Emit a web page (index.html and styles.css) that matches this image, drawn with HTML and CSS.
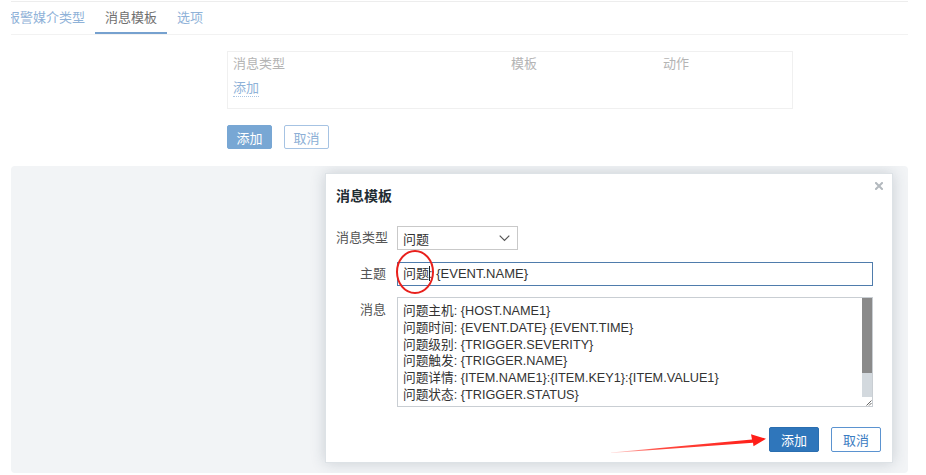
FILE: index.html
```html
<!DOCTYPE html>
<html lang="zh-CN">
<head>
<meta charset="utf-8">
<title>消息模板</title>
<link rel="stylesheet" href="styles.css">
</head>
<body>
<div class="page">
  <nav class="tabs">
    <div class="tabs-inner">
      <a class="tab tab-first">报警媒介类型</a>
      <a class="tab active">消息模板</a>
      <a class="tab">选项</a>
    </div>
  </nav>

  <div class="tpl-table">
    <div class="tpl-head"><span>消息类型</span><span>模板</span><span>动作</span></div>
    <div class="tpl-row"><a class="link">添加</a></div>
  </div>

  <div class="actions">
    <button class="btn btn-main-faded">添加</button>
    <button class="btn btn-alt-faded">取消</button>
  </div>

  <div class="overlay-area">
    <div class="modal">
      <button class="close" aria-label="关闭"><svg width="8" height="8" viewBox="0 0 8 8"><path d="M1 1L7 7M7 1L1 7" stroke="#b3b9be" stroke-width="2" stroke-linecap="square"/></svg></button>
      <h2 class="modal-title">消息模板</h2>
      <div class="form">
        <label class="f-label">消息类型</label>
        <div class="select"><span>问题</span><svg width="11" height="7" viewBox="0 0 11 7"><polyline points="0.7,0.7 5.5,5.5 10.3,0.7" fill="none" stroke="#555" stroke-width="1.2"/></svg></div>

        <label class="f-label">主题</label>
        <div class="input">问题<span class="caret"></span>: {EVENT.NAME}</div>

        <label class="f-label f-top">消息</label>
        <div class="textarea">
          <div class="ta-text">问题主机: {HOST.NAME1}
问题时间: {EVENT.DATE} {EVENT.TIME}
问题级别: {TRIGGER.SEVERITY}
问题触发: {TRIGGER.NAME}
问题详情: {ITEM.NAME1}:{ITEM.KEY1}:{ITEM.VALUE1}
问题状态: {TRIGGER.STATUS}</div>
          <div class="ta-scroll">
            <div class="ta-thumb"></div>
            <div class="ta-track"></div>
            <div class="ta-corner"><svg width="7" height="7" viewBox="0 0 7 7"><path d="M6.5 1.5L1.5 6.5M6.5 4L4 6.5" stroke="#666" stroke-width="1"/></svg></div>
          </div>
        </div>
      </div>
      <div class="modal-footer">
        <button class="btn btn-main">添加</button>
        <button class="btn btn-alt">取消</button>
      </div>

      <svg class="mark-circle" width="44" height="48" viewBox="0 0 44 48"><ellipse cx="21" cy="24" rx="18" ry="21" fill="none" stroke="#e8201c" stroke-width="2"/></svg>
      <svg class="mark-arrow" width="160" height="25" viewBox="0 0 160 25">
        <defs>
          <linearGradient id="ag" x1="0" y1="0" x2="1" y2="0">
            <stop offset="0" stop-color="#ff2a1f" stop-opacity="0.15"/>
            <stop offset="0.3" stop-color="#ff2a1f" stop-opacity="0.85"/>
            <stop offset="1" stop-color="#ff1a14"/>
          </linearGradient>
        </defs>
        <polygon points="2,22.4 143,9.6 142,4.3 157,8.8 144.5,16.2 144,12.8 2,22.9" fill="url(#ag)"/>
      </svg>
    </div>
  </div>
</div>
</body>
</html>
```

FILE: styles.css
```css
* { box-sizing: border-box; }

html, body {
  margin: 0;
  padding: 0;
  background: #ffffff;
}

body {
  font-family: "Liberation Sans", "Noto Sans CJK SC", sans-serif;
  font-size: 13px;
  color: #333;
}

.page {
  margin-left: 11px;
  width: 897px;
}

/* tabs */
.tabs {
  margin-top: 1px;
  border-top: 1px solid #ededed;
}

.tabs-inner {
  display: flex;
  overflow: hidden;
  border-bottom: 1px solid #f2f2f2;
}

.tab {
  display: block;
  padding: 4px 10px 2px;
  line-height: 24px;
  border-bottom: 2px solid transparent;
  color: #8fb2d8;
  white-space: nowrap;
  text-decoration: none;
}

.tab-first { margin-left: -14px; }

.tab.active {
  color: #707070;
  border-bottom-color: #76a1cf;
}

/* template table */
.tpl-table {
  margin: 16px 0 0 216px;
  width: 566px;
  border: 1px solid #f0f0f0;
  padding: 0 5px 8px;
}

.tpl-head {
  display: grid;
  grid-template-columns: 278px 152px 1fr;
  line-height: 24px;
  color: #b4b4b4;
}

.tpl-row {
  line-height: 24px;
}

.link {
  color: #8fb2d8;
  text-decoration: none;
  border-bottom: 1px dotted #a9c4e2;
  line-height: 16px;
  display: inline-block;
}

/* buttons */
.actions {
  margin: 16px 0 0 216px;
  display: flex;
  gap: 12px;
}

.btn {
  font-family: inherit;
  font-size: 13px;
  height: 24px;
  width: 45px;
  padding: 0;
  border-radius: 2px;
  cursor: pointer;
}

.btn-main-faded {
  background: #78a7d4;
  border: 1px solid #78a7d4;
  color: #fff;
}

.btn-alt-faded {
  background: #fff;
  border: 1px solid #a6c3e3;
  color: #8cafd6;
}

/* overlay area */
.overlay-area {
  margin-top: 17px;
  background: #f2f4f6;
  border-radius: 4px;
  overflow: hidden;
  padding: 7px 15px 10px 314px;
}

.modal {
  position: relative;
  width: 568px;
  height: 290px;
  background: #fff;
  border: 1px solid #dde2e6;
  box-shadow: 0 0 14px rgba(40, 60, 80, 0.2);
}

.close {
  position: absolute;
  top: 7px;
  right: 8px;
  width: 10px;
  height: 10px;
  padding: 1px;
  border: 0;
  background: transparent;
  display: flex;
}

.modal-title {
  margin: 0;
  padding: 12px 0 0 10px;
  font-size: 14px;
  line-height: 20px;
  font-weight: bold;
  color: #1f2c33;
}

.form {
  margin: 20px 0 0 10px;
  display: grid;
  grid-template-columns: 50px 476px;
  column-gap: 11px;
  row-gap: 12px;
}

.f-label {
  text-align: right;
  color: #555;
  align-self: center;
  line-height: 18px;
  white-space: nowrap;
}

.f-label.f-top {
  align-self: start;
  padding-top: 4px;
  margin-top: -1px;
}

.select {
  width: 121px;
  height: 24px;
  border: 1px solid #c9c9c9;
  display: flex;
  align-items: center;
  justify-content: space-between;
  padding: 0 7px 0 5px;
  color: #333;
}

.input {
  height: 24px;
  border: 1px solid #4f7cac;
  padding-left: 5px;
  line-height: 22px;
  color: #333;
  white-space: pre;
}

.caret {
  display: inline-block;
  width: 1px;
  height: 15px;
  background: #222;
  vertical-align: -3px;
  margin-right: -1px;
}

.textarea {
  height: 110px;
  margin-top: -1px;
  border: 1px solid #c9ced3;
  display: flex;
}

.ta-text {
  flex: 1;
  padding: 5px 5px;
  font-size: 12.7px;
  line-height: 16.8px;
  white-space: pre;
  overflow: hidden;
  color: #333;
}

.ta-scroll {
  width: 10px;
  display: flex;
  flex-direction: column;
}

.ta-thumb {
  height: 75px;
  background: #8a8a8a;
}

.ta-track {
  flex: 1;
  background: #d3d9de;
}

.ta-corner {
  height: 9px;
  background: #fff;
  display: flex;
  align-items: flex-end;
  justify-content: flex-end;
}

.modal-footer {
  margin-top: 20px;
  display: flex;
  justify-content: flex-end;
  gap: 12px;
  padding-right: 11px;
}

.modal-footer .btn {
  width: 50px;
  height: 25px;
}

.btn-main {
  background: #2f76bb;
  border: 1px solid #2a6eb0;
  color: #fff;
}

.btn-alt {
  background: #fff;
  border: 1px solid #5b93d0;
  color: #3b7cc2;
}

/* annotations */
.mark-circle {
  position: absolute;
  left: 68px;
  top: 74px;
}

.mark-arrow {
  position: absolute;
  left: 283px;
  top: 256px;
}
```
